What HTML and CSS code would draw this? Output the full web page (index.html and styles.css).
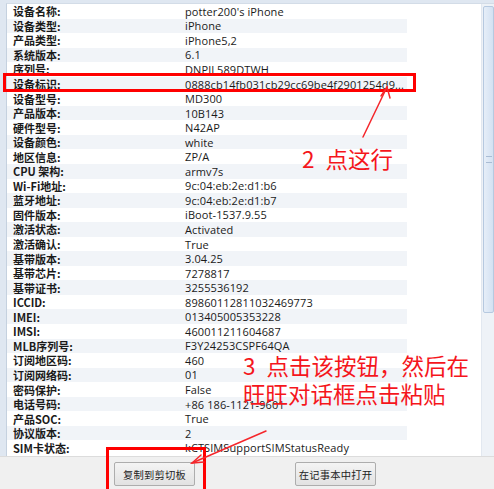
FILE: index.html
```html
<!DOCTYPE html>
<html lang="zh-CN">
<head>
    <meta charset="UTF-8">
    <title>设备信息</title>
    <link rel="stylesheet" href="styles.css">
</head>
<body>

<div class="window">
    <!-- Info List -->
    <div class="panel">
        <div class="info-list">
            <div class="row"><span class="label">设备名称:</span><span class="value">potter200's iPhone</span></div>
            <div class="row"><span class="label">设备类型:</span><span class="value">iPhone</span></div>
            <div class="row"><span class="label">产品类型:</span><span class="value">iPhone5,2</span></div>
            <div class="row"><span class="label">系统版本:</span><span class="value">6.1</span></div>
            <div class="row"><span class="label">序列号:</span><span class="value">DNPJL589DTWH</span></div>
            <div class="row"><span class="label">设备标识:</span><span class="value">0888cb14fb031cb29cc69be4f2901254d9...</span></div>
            <div class="row"><span class="label">设备型号:</span><span class="value">MD300</span></div>
            <div class="row"><span class="label">产品版本:</span><span class="value">10B143</span></div>
            <div class="row"><span class="label">硬件型号:</span><span class="value">N42AP</span></div>
            <div class="row"><span class="label">设备颜色:</span><span class="value">white</span></div>
            <div class="row"><span class="label">地区信息:</span><span class="value">ZP/A</span></div>
            <div class="row"><span class="label">CPU 架构:</span><span class="value">armv7s</span></div>
            <div class="row"><span class="label">Wi-Fi地址:</span><span class="value">9c:04:eb:2e:d1:b6</span></div>
            <div class="row"><span class="label">蓝牙地址:</span><span class="value">9c:04:eb:2e:d1:b7</span></div>
            <div class="row"><span class="label">固件版本:</span><span class="value">iBoot-1537.9.55</span></div>
            <div class="row"><span class="label">激活状态:</span><span class="value">Activated</span></div>
            <div class="row"><span class="label">激活确认:</span><span class="value">True</span></div>
            <div class="row"><span class="label">基带版本:</span><span class="value">3.04.25</span></div>
            <div class="row"><span class="label">基带芯片:</span><span class="value">7278817</span></div>
            <div class="row"><span class="label">基带证书:</span><span class="value">3255536192</span></div>
            <div class="row"><span class="label">ICCID:</span><span class="value">89860112811032469773</span></div>
            <div class="row"><span class="label">IMEI:</span><span class="value">013405005353228</span></div>
            <div class="row"><span class="label">IMSI:</span><span class="value">460011211604687</span></div>
            <div class="row"><span class="label">MLB序列号:</span><span class="value">F3Y24253CSPF64QA</span></div>
            <div class="row"><span class="label">订阅地区码:</span><span class="value">460</span></div>
            <div class="row"><span class="label">订阅网络码:</span><span class="value">01</span></div>
            <div class="row"><span class="label">密码保护:</span><span class="value">False</span></div>
            <div class="row"><span class="label">电话号码:</span><span class="value">+86 186-1121-9601</span></div>
            <div class="row"><span class="label">产品SOC:</span><span class="value">True</span></div>
            <div class="row"><span class="label">协议版本:</span><span class="value">2</span></div>
            <div class="row"><span class="label">SIM卡状态:</span><span class="value">kCTSIMSupportSIMStatusReady</span></div>
        </div>
        <div class="scrollbar">
            <div class="thumb"><span class="grip"></span></div>
        </div>
    </div>

    <!-- Buttons -->
    <div class="footer">
        <button class="btn">复制到剪切板</button>
        <button class="btn">在记事本中打开</button>
    </div>

    <!-- Annotations -->
    <svg class="marks" width="494" height="489" viewBox="0 0 494 489">
        <rect x="4.5" y="74.5" width="410" height="16" fill="none" stroke="#f00" stroke-width="3"/>
        <rect x="107.5" y="448.5" width="97" height="44" fill="none" stroke="#f00" stroke-width="3"/>
        <g stroke="#f5262b" stroke-width="1.5" fill="none" stroke-linecap="round">
            <path d="M363 137 L387 87"/>
            <path d="M381 96 L387 87 L390 98"/>
            <path d="M266 431 L192 463"/>
            <path d="M201 455 L192 463 L204 462"/>
        </g>
    </svg>
    <div class="note note-row">2 点这行</div>
    <div class="note note-button">3 点击该按钮，然后在<br>旺旺对话框点击粘贴</div>
</div>

</body>
</html>
```

FILE: styles.css
```css
/* General */
body {
    margin: 0;
    padding: 0;
    font-family: "Open Sans", "Noto Sans CJK SC", sans-serif;
    background-color: #fff;
}

.window {
    position: relative;
    width: 494px;
    height: 489px;
    overflow: hidden;
    background-color: #dfe7f1;
    display: flex;
    flex-direction: column;
}

/* Info Panel */
.panel {
    display: flex;
    height: 452px;
    margin-top: 3px;
    margin-left: 6px;
    background-color: #fff;
    border-top: 1px solid #d3dce7;
    border-left: 1px solid #c5d1df;
}

.info-list {
    flex: 1;
    padding-right: 74px;
}

.row {
    display: flex;
    align-items: center;
    height: 14.55px;
    font-size: 11px;
    color: #1a1a1a;
    white-space: nowrap;
}

.row:nth-child(even) {
    background-color: #f1f4f8;
}

.label {
    width: 172px;
    padding-left: 6px;
    font-family: "Noto Sans CJK SC", sans-serif;
    font-weight: bold;
}

.value {
    font-family: "Open Sans", "Noto Sans CJK SC", sans-serif;
    letter-spacing: 0.1px;
}

/* Scrollbar */
.scrollbar {
    width: 12px;
    background-color: #eef2f7;
    border-left: 1px solid #e2e8f0;
}

.thumb {
    display: flex;
    align-items: center;
    justify-content: center;
    height: 305px;
    margin-top: 2px;
    margin-left: 1px;
    background: linear-gradient(to right, #e6eef8, #d3e1f2);
    border: 1px solid #b6c9e0;
    border-radius: 2px;
}

.grip {
    width: 6px;
    height: 5px;
    border-top: 1px solid #a9bcd4;
    border-bottom: 1px solid #a9bcd4;
}

/* Footer */
.footer {
    flex: 1;
    display: flex;
    justify-content: center;
    align-items: flex-start;
    gap: 100px;
    padding-top: 5px;
    padding-right: 4px;
    background-color: #f0f0f0;
    border-top: 1px solid #dcdcdc;
}

.btn {
    width: 81px;
    height: 24px;
    padding: 0;
    font-family: "Noto Sans CJK SC", sans-serif;
    font-size: 10.3px;
    letter-spacing: 0.2px;
    color: #222;
    background: linear-gradient(to bottom, #f4f4f4, #e2e2e2);
    border: 1px solid #adadad;
    border-radius: 2px;
}

/* Red Annotations */
.marks {
    position: absolute;
    left: 0;
    top: 0;
}

.note {
    position: absolute;
    font-family: "Noto Sans CJK SC", sans-serif;
    font-size: 22.5px;
    word-spacing: 6px;
    color: #f5161c;
    line-height: 28px;
    white-space: nowrap;
}

.note-row {
    left: 302px;
    top: 144px;
}

.note-button {
    left: 243px;
    top: 351px;
}
```
